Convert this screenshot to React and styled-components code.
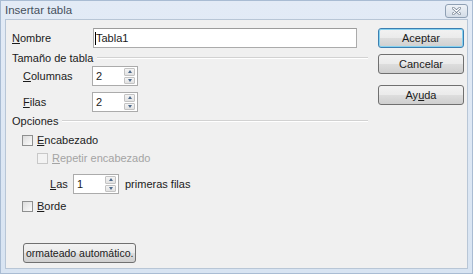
import React from 'react';
import styled, { createGlobalStyle, css } from 'styled-components';

const GlobalStyle = createGlobalStyle`
  html, body { margin: 0; padding: 0; background: #dbe5f1; }
  body { font-family: "Liberation Sans", "DejaVu Sans", sans-serif; }
`;

const Colors = {
  frame: '#d8e4f2',
  body: '#f0f0f0',
  text: '#1b1b1b',
  muted: '#a4a4a4',
  line: '#d2d2d2',
  field: '#ababab',
};

const Window = styled.div`
  width: 473px;
  height: 274px;
  box-sizing: border-box;
  display: flex;
  flex-direction: column;
  background: linear-gradient(#e3ebf6, ${Colors.frame});
  border: 1px solid #a9bcd3;
  padding: 0 4px 4px 4px;
`;

const TitleBar = styled.div`
  height: 18px;
  display: flex;
  align-items: center;
  justify-content: space-between;
  font-size: 11.5px;
  color: #46505c;
`;

const CloseButton = styled.div`
  width: 21px;
  height: 12px;
  margin-top: 2px;
  border: 1px solid #8fa0b4;
  border-radius: 3px;
  background: linear-gradient(#eef2f7, #d3dce7);
  display: flex;
  align-items: center;
  justify-content: center;
`;

const Body = styled.div`
  flex: 1;
  background: ${Colors.body};
  border: 1px solid #b8c6d6;
  display: flex;
  font-size: 11px;
  color: ${Colors.text};
`;

const Main = styled.div`
  width: 356px;
  padding: 7px 0 0 6px;
  display: flex;
  flex-direction: column;
`;

const Side = styled.div`
  padding: 8px 0 0 10px;
  display: flex;
  flex-direction: column;
`;

const Row = styled.div`
  display: flex;
  align-items: center;
  height: ${p => p.h || 20}px;
  margin-top: ${p => p.mt || 0}px;
  padding-left: ${p => p.indent || 0}px;
`;

const Label = styled.span`
  width: ${p => (p.w ? `${p.w}px` : 'auto')};
  flex-shrink: 0;
  margin-left: ${p => p.ml || 0}px;
  color: ${p => (p.disabled ? Colors.muted : Colors.text)};
  & u { text-decoration: underline; text-underline-offset: 1px; }
`;

const TextInput = styled.div`
  flex: 1;
  height: 20px;
  box-sizing: border-box;
  margin-right: 11px;
  border: 1px solid ${Colors.field};
  border-top-color: #9c9c9c;
  background: #fff;
  display: flex;
  align-items: center;
  padding-left: 1px;
  font-size: 11px;
`;

const Caret = styled.span`
  display: inline-block;
  width: 1px;
  height: 13px;
  background: #000;
`;

const SectionTitle = styled.div`
  display: flex;
  align-items: center;
  gap: 4px;
  height: 14px;
  margin-top: ${p => p.mt || 0}px;
  &::after {
    content: '';
    flex: 1;
    height: 0;
    border-top: 1px solid ${Colors.line};
    border-bottom: 1px solid #fff;
  }
`;

const Spin = styled.div`
  width: 46px;
  height: 20px;
  box-sizing: border-box;
  border: 1px solid ${Colors.field};
  background: #fff;
  display: flex;
  align-items: center;
  justify-content: space-between;
  padding: 1px 2px 1px 3px;
`;

const SpinButtons = styled.div`
  display: flex;
  flex-direction: column;
  height: 100%;
  width: 11px;
`;

const SpinButton = styled.div`
  flex: 1;
  box-sizing: border-box;
  border: 1px solid #c3c3c3;
  border-radius: 1px;
  background: linear-gradient(#f4f4f4, #e2e2e2);
  display: flex;
  align-items: center;
  justify-content: center;
  ${p => p.down && css`margin-top: 1px;`}
  &::before {
    content: '';
    width: 0;
    height: 0;
    border-left: 2.5px solid transparent;
    border-right: 2.5px solid transparent;
    ${p => (p.down
      ? css`border-top: 3px solid #4d6a8c;`
      : css`border-bottom: 3px solid #4d6a8c;`)}
  }
`;

const CheckBox = styled.span`
  width: 11px;
  height: 11px;
  box-sizing: border-box;
  flex-shrink: 0;
  border: 1px solid ${p => (p.disabled ? '#c8c8c8' : '#8e8f8f')};
  background: ${p => (p.disabled ? '#f3f3f3' : 'linear-gradient(135deg, #dcdcdc, #fbfbfb)')};
  margin-right: 4px;
`;

const Button = styled.div`
  width: ${p => (p.w ? `${p.w}px` : 'auto')};
  height: ${p => p.h || 20}px;
  box-sizing: border-box;
  padding: 0 ${p => (p.w ? 0 : 2)}px;
  border: 1px solid ${p => (p.focused ? '#3c7fb1' : '#707070')};
  border-radius: 3px;
  background: linear-gradient(#f2f2f2 0%, #ebebeb 48%, #dddddd 52%, #cfcfcf 100%);
  ${p => p.focused && css`box-shadow: inset 0 0 0 1px #86d2f0;`}
  display: flex;
  align-items: center;
  justify-content: center;
  white-space: nowrap;
  margin-top: ${p => p.mt || 0}px;
  margin-left: ${p => p.ml || 0}px;
  font-size: ${p => p.fs || 11}px;
  color: ${Colors.text};
`;

const Spacer = styled.div`
  flex: 1;
`;

const BottomGap = styled.div`
  height: 5px;
`;

const SpinBox = ({ value }) => (
  <Spin>
    <span>{value}</span>
    <SpinButtons>
      <SpinButton />
      <SpinButton down />
    </SpinButtons>
  </Spin>
);

const Check = ({ disabled, children }) => (
  <>
    <CheckBox disabled={disabled} />
    <Label disabled={disabled}>{children}</Label>
  </>
);

export default function App() {
  return (
    <>
      <GlobalStyle />
      <Window>
        <TitleBar>
          <span>Insertar tabla</span>
          <CloseButton>
            <svg width="9" height="8" viewBox="0 0 9 8">
              <path d="M1 1 L8 7 M8 1 L1 7" stroke="#6d7b8c" strokeWidth="2.6" strokeLinecap="round" />
              <path d="M1 1 L8 7 M8 1 L1 7" stroke="#ffffff" strokeWidth="1.2" strokeLinecap="round" />
            </svg>
          </CloseButton>
        </TitleBar>
        <Body>
          <Main>
            <Row mt={1}>
              <Label w={81}><u>N</u>ombre</Label>
              <TextInput><Caret />Tabla1</TextInput>
            </Row>
            <SectionTitle mt={3}>Tamaño de tabla</SectionTitle>
            <Row mt={1} indent={11}>
              <Label w={69}><u>C</u>olumnas</Label>
              <SpinBox value="2" />
            </Row>
            <Row mt={6} indent={11}>
              <Label w={69}><u>F</u>ilas</Label>
              <SpinBox value="2" />
            </Row>
            <SectionTitle mt={2}>Opciones</SectionTitle>
            <Row h={16} mt={4} indent={10}>
              <Check><u>E</u>ncabezado</Check>
            </Row>
            <Row h={16} mt={2} indent={25}>
              <Check disabled><u>R</u>epetir encabezado</Check>
            </Row>
            <Row mt={8} indent={38}>
              <Label w={23}><u>L</u>as</Label>
              <SpinBox value="1" />
              <Label ml={6}>primeras filas</Label>
            </Row>
            <Row h={16} mt={4} indent={10}>
              <Check><u>B</u>orde</Check>
            </Row>
            <Spacer />
            <Row>
              <Button ml={11} fs={10.5}>ormateado automático.</Button>
            </Row>
            <BottomGap />
          </Main>
          <Side>
            <Button w={86} focused>Aceptar</Button>
            <Button w={86} mt={6}>Cancelar</Button>
            <Button w={86} mt={11}>Ay<u>u</u>da</Button>
          </Side>
        </Body>
      </Window>
    </>
  );
}
